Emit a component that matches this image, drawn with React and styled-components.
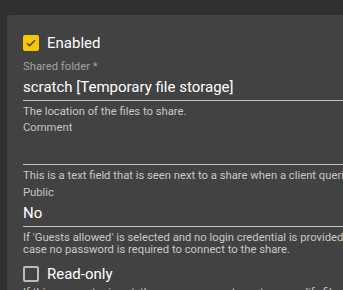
import styled, { createGlobalStyle } from "styled-components";

const GlobalStyle = createGlobalStyle`
  body {
    margin: 0;
    background: #303030;
    overflow: hidden;
    font-family: Roboto, "Noto Sans", sans-serif;
  }
`;

const Page = styled.div`
  padding: 15px 0 0 7px;
`;

const Card = styled.div`
  width: 700px;
  background: #424242;
  border-radius: 4px;
  padding: 20px 16px;
`;

const CheckRow = styled.label`
  display: flex;
  align-items: center;
  gap: 8px;
  height: 16px;
  margin-top: ${(p) => p.$top || 0}px;
  color: #fff;
  font-size: 15px;
  line-height: 16px;
`;

const Box = styled.span`
  box-sizing: border-box;
  width: 16px;
  height: 16px;
  border-radius: 2px;
  display: flex;
  align-items: center;
  justify-content: center;
  background: ${(p) => (p.$checked ? "#f5c800" : "transparent")};
  border: ${(p) => (p.$checked ? "none" : "2px solid #bcbcbc")};
`;

const Field = styled.div`
  margin-top: ${(p) => p.$top || 0}px;
`;

const Label = styled.div`
  font-size: 11.25px;
  line-height: 13px;
  color: ${(p) => (p.$dim ? "#a3a3a3" : "#c4c4c4")};
`;

const Value = styled.div`
  margin-top: 4px;
  min-height: ${(p) => p.$height || 20}px;
  padding-bottom: 3px;
  border-bottom: 1px solid #c6c6c6;
  color: #fff;
  font-size: 15px;
  line-height: 20px;
  white-space: nowrap;
`;

const Hint = styled.div`
  margin-top: 5px;
  font-size: 11.25px;
  line-height: 12px;
  color: #c8c8c8;
  white-space: nowrap;
`;

const Check = () => (
  <svg width="12" height="12" viewBox="0 0 24 24">
    <path d="M4 12.5l5 5L20 6.5" fill="none" stroke="#333" strokeWidth="2.6" />
  </svg>
);

export default function App() {
  return (
    <>
      <GlobalStyle />
      <Page>
        <Card>
          <CheckRow>
            <Box $checked>
              <Check />
            </Box>
            Enabled
          </CheckRow>
          <Field $top={9}>
            <Label $dim>Shared folder *</Label>
            <Value>scratch [Temporary file storage]</Value>
            <Hint>The location of the files to share.</Hint>
          </Field>
          <Field $top={3}>
            <Label>Comment</Label>
            <Value $height={23} />
            <Hint>
              This is a text field that is seen next to a share when a client
              queries the server.
            </Hint>
          </Field>
          <Field $top={4}>
            <Label>Public</Label>
            <Value>No</Value>
            <Hint>
              If 'Guests allowed' is selected and no login credential is
              provided, then access as guest. Always access as guest when
              'Guests only' is selected; in this
              <br />
              case no password is required to connect to the share.
            </Hint>
          </Field>
          <CheckRow $top={10}>
            <Box />
            Read-only
          </CheckRow>
          <Hint>
            If this parameter is set, then users may not create or modify files
            in the service's directory.
          </Hint>
        </Card>
      </Page>
    </>
  );
}
